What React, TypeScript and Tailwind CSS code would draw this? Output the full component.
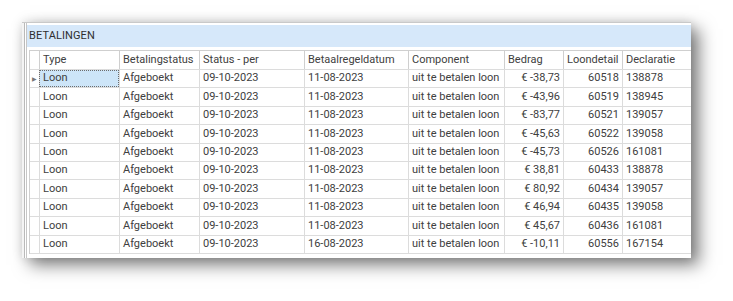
import React from "react";

const columns = [
  { key: "type", label: "Type", right: false },
  { key: "status", label: "Betalingstatus", right: false },
  { key: "per", label: "Status - per", right: false },
  { key: "datum", label: "Betaalregeldatum", right: false },
  { key: "component", label: "Component", right: false },
  { key: "bedrag", label: "Bedrag", right: true },
  { key: "loondetail", label: "Loondetail", right: true },
  { key: "declaratie", label: "Declaratie", right: false },
];

const rows = [
  ["Loon", "Afgeboekt", "09-10-2023", "11-08-2023", "uit te betalen loon", "€ -38,73", "60518", "138878"],
  ["Loon", "Afgeboekt", "09-10-2023", "11-08-2023", "uit te betalen loon", "€ -43,96", "60519", "138945"],
  ["Loon", "Afgeboekt", "09-10-2023", "11-08-2023", "uit te betalen loon", "€ -83,77", "60521", "139057"],
  ["Loon", "Afgeboekt", "09-10-2023", "11-08-2023", "uit te betalen loon", "€ -45,63", "60522", "139058"],
  ["Loon", "Afgeboekt", "09-10-2023", "11-08-2023", "uit te betalen loon", "€ -45,73", "60526", "161081"],
  ["Loon", "Afgeboekt", "09-10-2023", "11-08-2023", "uit te betalen loon", "€ 38,81", "60433", "138878"],
  ["Loon", "Afgeboekt", "09-10-2023", "11-08-2023", "uit te betalen loon", "€ 80,92", "60434", "139057"],
  ["Loon", "Afgeboekt", "09-10-2023", "11-08-2023", "uit te betalen loon", "€ 46,94", "60435", "139058"],
  ["Loon", "Afgeboekt", "09-10-2023", "11-08-2023", "uit te betalen loon", "€ 45,67", "60436", "161081"],
  ["Loon", "Afgeboekt", "09-10-2023", "16-08-2023", "uit te betalen loon", "€ -10,11", "60556", "167154"],
];

const gridCols = "grid grid-cols-[9px_80px_80px_105px_104px_96px_59px_59px_69px]";

export default function App() {
  return (
    <div className="w-[733px] h-[301px] bg-white pl-[22px] pt-[22px] font-['Roboto',sans-serif] text-[11px] text-[#404040]">
      <div className="w-[669px] h-[236px] bg-white border-t border-[#c9c9c9] shadow-[0_0_10px_rgba(0,0,0,0.12),8px_7px_16px_rgba(0,0,0,0.5)] flex">
        <div className="w-[2px] bg-[#f4f4f4]" />
        <div className="w-[3px] border-l border-[#b9b9b9]" />
        <div className="flex-1 border-l border-[#c6c6c6] pt-[2px] flex flex-col">
          <div className="h-[22px] bg-[#d6e8fa] flex items-center pl-[2px] tracking-[0.1px] text-[#2f2f2f]">
            BETALINGEN
          </div>
          <div className="mt-[3px] ml-[2px] border-t border-l border-[#cfcfcf]">
            <div className={`${gridCols} h-[18px]`}>
              <div />
              {columns.map((c) => (
                <div
                  key={c.key}
                  className="border-l border-[#cfcfcf] px-[3px] flex items-center whitespace-nowrap overflow-hidden"
                >
                  {c.label}
                </div>
              ))}
            </div>
            {rows.map((r, i) => (
              <div key={i} className={`${gridCols} h-[18.4px] border-t border-[#dcdcdc]`}>
                <div className="flex items-center justify-center text-[#777] text-[6px]">
                  {i === 0 ? "▶" : ""}
                </div>
                {r.map((v, j) => (
                  <div
                    key={j}
                    className={`border-l border-[#dcdcdc] flex items-center whitespace-nowrap overflow-hidden ${
                      columns[j].right ? "justify-end pr-[3px]" : "pl-[3px]"
                    } ${
                      i === 0 && j === 0
                        ? "bg-[#cde5f8] outline outline-1 outline-dotted outline-[#6c6c6c] -outline-offset-1"
                        : ""
                    }`}
                  >
                    {v}
                  </div>
                ))}
              </div>
            ))}
            <div className="border-t border-[#dcdcdc]" />
          </div>
        </div>
      </div>
    </div>
  );
}
